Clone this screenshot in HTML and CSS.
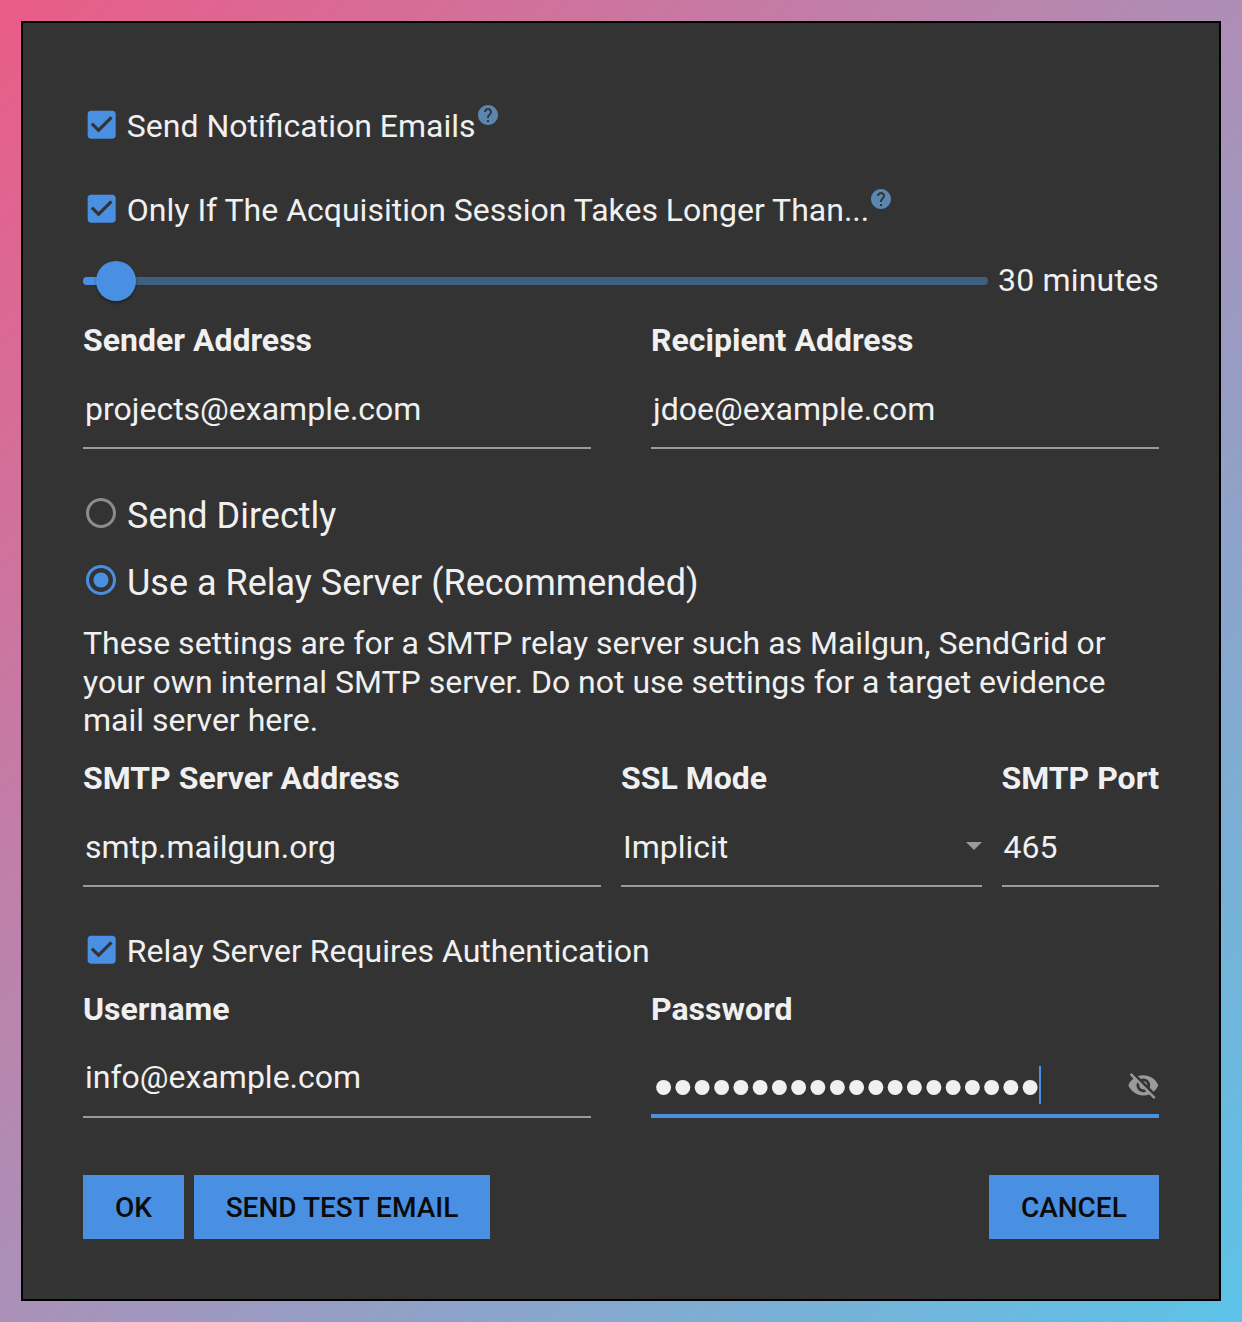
FILE: index.html
```html
<!DOCTYPE html>
<html lang="en">
<head>
<meta charset="utf-8">
<title>Notification Settings</title>
<link rel="stylesheet" href="styles.css">
</head>
<body>
<main class="panel">
  <div class="check-row lead">
    <svg class="checkbox" viewBox="0 0 24 24"><path d="M19 3H5c-1.11 0-2 .9-2 2v14c0 1.1.89 2 2 2h14c1.11 0 2-.9 2-2V5c0-1.11-.89-2-2-2zm-9 14l-5-5 1.41-1.41L10 14.17l7.59-7.59L19 8l-9 9z"/></svg>
    <span class="check-text">Send Notification Emails</span>
    <svg class="help" viewBox="0 0 24 24"><path d="M12 2C6.48 2 2 6.48 2 12s4.48 10 10 10 10-4.48 10-10S17.52 2 12 2zm1 17h-2v-2h2v2zm2.07-7.75l-.9.92C13.45 12.9 13 13.5 13 15h-2v-.5c0-1.1.45-2.1 1.17-2.83l1.24-1.26c.37-.36.59-.86.59-1.41 0-1.1-.9-2-2-2s-2 .9-2 2H8c0-2.21 1.79-4 4-4s4 1.79 4 4c0 .88-.36 1.68-.93 2.25z"/></svg>
  </div>
  <div class="check-row lead second">
    <svg class="checkbox" viewBox="0 0 24 24"><path d="M19 3H5c-1.11 0-2 .9-2 2v14c0 1.1.89 2 2 2h14c1.11 0 2-.9 2-2V5c0-1.11-.89-2-2-2zm-9 14l-5-5 1.41-1.41L10 14.17l7.59-7.59L19 8l-9 9z"/></svg>
    <span class="check-text">Only If The Acquisition Session Takes Longer Than...</span>
    <svg class="help" viewBox="0 0 24 24"><path d="M12 2C6.48 2 2 6.48 2 12s4.48 10 10 10 10-4.48 10-10S17.52 2 12 2zm1 17h-2v-2h2v2zm2.07-7.75l-.9.92C13.45 12.9 13 13.5 13 15h-2v-.5c0-1.1.45-2.1 1.17-2.83l1.24-1.26c.37-.36.59-.86.59-1.41 0-1.1-.9-2-2-2s-2 .9-2 2H8c0-2.21 1.79-4 4-4s4 1.79 4 4c0 .88-.36 1.68-.93 2.25z"/></svg>
  </div>
  <div class="slider-row">
    <div class="slider">
      <div class="slider-fill"></div>
      <div class="slider-thumb"></div>
    </div>
    <span class="slider-value">30 minutes</span>
  </div>
  <div class="grid-two">
    <div>
      <div class="label">Sender Address</div>
      <div class="field">projects@example.com</div>
    </div>
    <div>
      <div class="label">Recipient Address</div>
      <div class="field">jdoe@example.com</div>
    </div>
  </div>
  <div class="radios">
    <div class="radio-row">
      <svg class="radio off" viewBox="0 0 24 24"><path d="M12 2C6.48 2 2 6.48 2 12s4.48 10 10 10 10-4.48 10-10S17.52 2 12 2zm0 18c-4.42 0-8-3.58-8-8s3.58-8 8-8 8 3.58 8 8-3.58 8-8 8z"/></svg>
      <span>Send Directly</span>
    </div>
    <div class="radio-row">
      <svg class="radio on" viewBox="0 0 24 24"><path d="M12 7c-2.76 0-5 2.24-5 5s2.24 5 5 5 5-2.24 5-5-2.24-5-5-5zm0-5C6.48 2 2 6.48 2 12s4.48 10 10 10 10-4.48 10-10S17.52 2 12 2zm0 18c-4.42 0-8-3.58-8-8s3.58-8 8-8 8 3.58 8 8-3.58 8-8 8z"/></svg>
      <span>Use a Relay Server (Recommended)</span>
    </div>
  </div>
  <p class="note">These settings are for a SMTP relay server such as Mailgun, SendGrid or your own internal SMTP server. Do not use settings for a target evidence mail server here.</p>
  <div class="grid-three">
    <div>
      <div class="label">SMTP Server Address</div>
      <div class="field">smtp.mailgun.org</div>
    </div>
    <div>
      <div class="label">SSL Mode</div>
      <div class="field select">Implicit<span class="arrow"></span></div>
    </div>
    <div>
      <div class="label">SMTP Port</div>
      <div class="field">465</div>
    </div>
  </div>
  <div class="check-row auth">
    <svg class="checkbox" viewBox="0 0 24 24"><path d="M19 3H5c-1.11 0-2 .9-2 2v14c0 1.1.89 2 2 2h14c1.11 0 2-.9 2-2V5c0-1.11-.89-2-2-2zm-9 14l-5-5 1.41-1.41L10 14.17l7.59-7.59L19 8l-9 9z"/></svg>
    <span>Relay Server Requires Authentication</span>
  </div>
  <div class="grid-two credentials">
    <div>
      <div class="label">Username</div>
      <div class="field username">info@example.com</div>
    </div>
    <div>
      <div class="label">Password</div>
      <div class="field password">
        <span class="dots">••••••••••••••••••••</span><span class="caret"></span>
        <svg class="eye" viewBox="0 0 24 24"><path d="M12 7c2.76 0 5 2.24 5 5 0 .65-.13 1.26-.36 1.83l2.92 2.92c1.51-1.26 2.7-2.89 3.43-4.75-1.73-4.39-6-7.5-11-7.5-1.4 0-2.74.25-3.98.7l2.16 2.16C10.74 7.13 11.35 7 12 7zM2 4.27l2.28 2.28.46.46C3.08 8.3 1.78 10.02 1 12c1.73 4.39 6 7.5 11 7.5 1.55 0 3.03-.3 4.38-.84l.42.42L19.73 22 21 20.73 3.27 3 2 4.27zM7.53 9.8l1.55 1.55c-.05.21-.08.43-.08.65 0 1.66 1.34 3 3 3 .22 0 .44-.03.65-.08l1.55 1.55c-.67.33-1.41.53-2.2.53-2.76 0-5-2.24-5-5 0-.79.2-1.53.53-2.2zm4.31-.78l3.15 3.15.02-.16c0-1.66-1.34-3-3-3l-.17.01z"/></svg>
      </div>
    </div>
  </div>
  <div class="actions">
    <button class="btn">OK</button>
    <button class="btn">SEND TEST EMAIL</button>
    <button class="btn push">CANCEL</button>
  </div>
</main>
</body>
</html>
```
FILE: styles.css
```css
* { box-sizing: border-box; }
html, body { margin: 0; }
body {
  width: 1242px;
  height: 1322px;
  padding: 21px;
  background: linear-gradient(135deg, #ea5c88 0%, #ac8fb7 50%, #5cc3e8 100%);
  font-family: Roboto, "Liberation Sans", sans-serif;
  color: #f0f0f0;
  overflow: hidden;
}
.panel {
  width: 1200px;
  height: 1280px;
  border: 2px solid #000;
  background: #333;
  padding: 70px 60px 60px;
  font-size: 32px;
}
.check-row {
  display: flex;
  align-items: center;
  height: 64px;
}
.check-row.second { margin-top: 20px; }
.check-row.auth { margin-top: 32px; }
.checkbox {
  width: 37.33px;
  height: 37.33px;
  margin-right: 6.5px;
  fill: #4a90e2;
  flex: none;
}
.auth .checkbox { margin-top: -4px; }
.check-text { padding-top: 2px; }
.help {
  width: 24px;
  height: 24px;
  margin: -20px 0 0 0;
  fill: #5a86b0;
  flex: none;
}
.slider-row {
  display: flex;
  align-items: center;
  justify-content: space-between;
  height: 80px;
}
.slider {
  position: relative;
  width: 905px;
  height: 8px;
  border-radius: 4px;
  background: #3d5f80;
}
.slider-fill {
  width: 20px;
  height: 8px;
  border-radius: 4px;
  background: #4a90e2;
}
.slider-thumb {
  position: absolute;
  left: 13px;
  top: -16px;
  width: 40px;
  height: 40px;
  border-radius: 50%;
  background: #4a90e2;
  box-shadow: 0 2px 3px rgba(0, 0, 0, 0.35);
}
.slider-value {
  white-space: nowrap;
  letter-spacing: 0.2px;
  padding-bottom: 2px;
}
.grid-two {
  display: grid;
  grid-template-columns: 508px 508px;
  column-gap: 60px;
}
.grid-three {
  display: grid;
  grid-template-columns: 518px 360.5px 157.5px;
  column-gap: 20px;
  margin-top: 19.7px;
}
.credentials { margin-top: 6.5px; }
.label {
  height: 38px;
  line-height: 38px;
  font-weight: 700;
  white-space: nowrap;
}
.field {
  display: flex;
  align-items: center;
  height: 90px;
  padding: 12px 2px 0;
  border-bottom: 2px solid #9a9a9a;
}
.username { padding-top: 10px; }
.select { justify-content: space-between; }
.arrow {
  width: 0;
  height: 0;
  margin-right: -2px;
  margin-bottom: 2px;
  border-left: 8px solid transparent;
  border-right: 8px solid transparent;
  border-top: 8px solid #9a9a9a;
}
.password {
  padding: 26px 0 0 3px;
  border-bottom: 4px solid #4a90e2;
}
.dots {
  font-family: "Liberation Sans", sans-serif;
  font-size: 55px;
  letter-spacing: 0.04px;
  line-height: 38px;
  padding-top: 6px;
  white-space: nowrap;
}
.caret {
  width: 2px;
  height: 38px;
  background: #4a90e2;
  margin: 2px 0 0 -1px;
}
.eye {
  width: 32.7px;
  height: 32.7px;
  margin-left: auto;
  margin-right: -1px;
  margin-top: 4px;
  fill: #9a9a9a;
  flex: none;
}
.radios { margin-top: 33px; }
.radio-row {
  display: flex;
  align-items: center;
  height: 67px;
  font-size: 36px;
}
.radio {
  width: 36px;
  height: 36px;
  margin-right: 8px;
  margin-top: -5px;
  flex: none;
}
.radio.off { fill: #8c8c8c; }
.radio.on { fill: #4a90e2; }
.note {
  margin: 8.3px 0 0;
  line-height: 38.4px;
}
.actions {
  display: flex;
  gap: 10px;
  margin-top: 57.5px;
}
.btn {
  height: 64px;
  padding: 0 31.9px;
  border: 0;
  background: #4a90e2;
  color: #0b0b0b;
  font: 500 28px Roboto, "Liberation Sans", sans-serif;
}
.push {
  margin-left: auto;
  padding: 0 32.2px;
}
```
